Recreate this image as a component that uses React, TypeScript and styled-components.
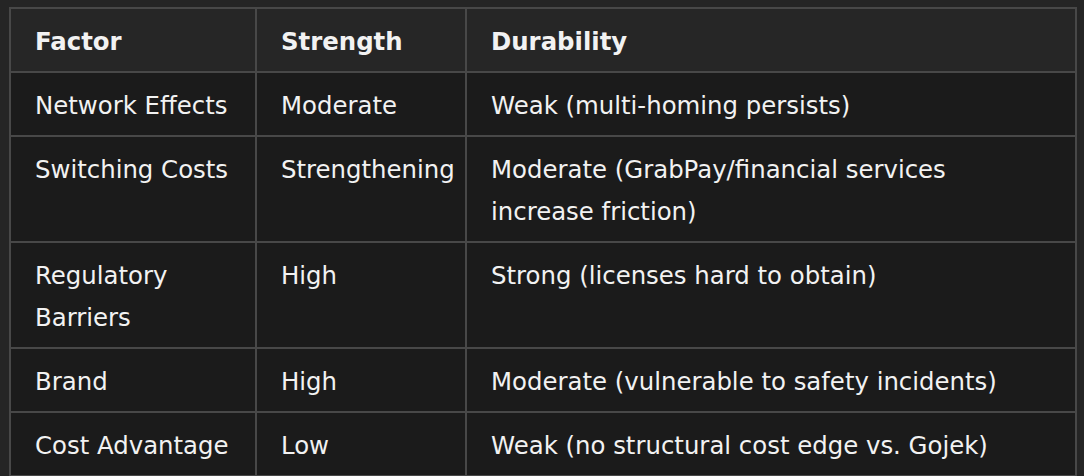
import styled, { createGlobalStyle } from "styled-components"

const rows = [
  { factor: "Network Effects", strength: "Moderate", durability: "Weak (multi-homing persists)" },
  { factor: "Switching Costs", strength: "Strengthening", durability: "Moderate (GrabPay/financial services increase friction)" },
  { factor: "Regulatory Barriers", strength: "High", durability: "Strong (licenses hard to obtain)" },
  { factor: "Brand", strength: "High", durability: "Moderate (vulnerable to safety incidents)" },
  { factor: "Cost Advantage", strength: "Low", durability: "Weak (no structural cost edge vs. Gojek)" },
]

const App = () => {
  return (
    <>
      <GlobalStyle />
      <Table>
        <colgroup>
          <col style={{ width: 246 }} />
          <col style={{ width: 210 }} />
          <col />
        </colgroup>
        <thead>
          <tr>
            <Th>Factor</Th>
            <Th>Strength</Th>
            <Th>Durability</Th>
          </tr>
        </thead>
        <tbody>
          {rows.map((r) => (
            <tr key={r.factor}>
              <Td>{r.factor}</Td>
              <Td>{r.strength}</Td>
              <Td>{r.durability}</Td>
            </tr>
          ))}
        </tbody>
      </Table>
    </>
  )
}

export default App

const GlobalStyle = createGlobalStyle`
  html, body {
    margin: 0;
    background: #252525;
  }
  body {
    font-family: "DejaVu Sans", Verdana, sans-serif;
    color: #f2f2f2;
  }
`

const Table = styled.table`
  margin: 7px 7px 0 9px;
  width: 1068px;
  table-layout: fixed;
  border-collapse: collapse;
  border: 2px solid #484848;
  font-size: 24.4px;
  line-height: 42px;
`

const Th = styled.th`
  background: #262626;
  border: 2px solid #484848;
  padding: 12px 24px 8px 24px;
  text-align: left;
  font-weight: bold;
  white-space: nowrap;
`

const Td = styled.td`
  background: #1b1b1b;
  border: 2px solid #484848;
  padding: 12px 24px 8px 24px;
  vertical-align: top;
`
